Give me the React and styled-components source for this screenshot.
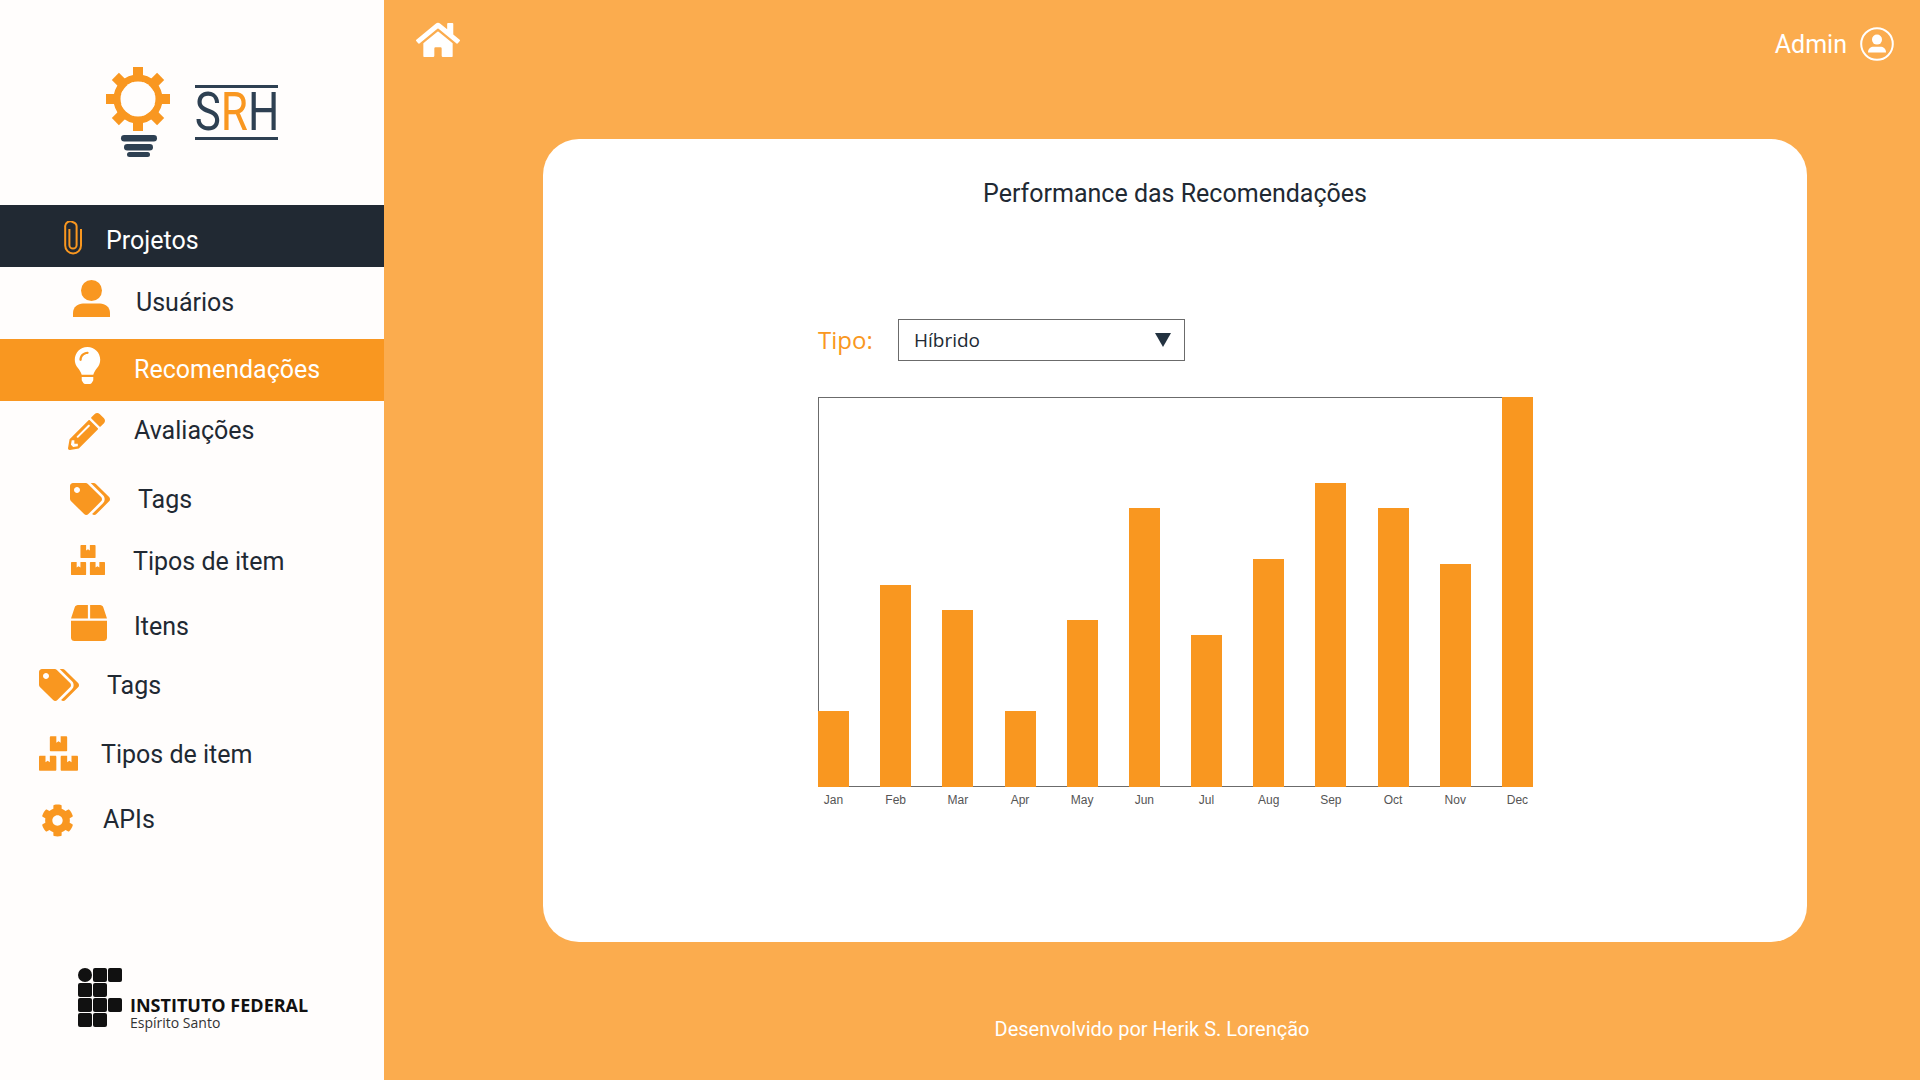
import React from "react";
import styled, { createGlobalStyle } from "styled-components";
import { FaHome, FaLightbulb, FaPencilAlt, FaTags, FaBoxes, FaBox, FaCog } from "react-icons/fa";

const Global = createGlobalStyle`
  html, body { margin: 0; padding: 0; }
  body { font-family: Roboto, "Liberation Sans", sans-serif; }
`;

const ORANGE = "#f99720";
const DARK = "#212933";

const Page = styled.div`
  display: flex;
  width: 1920px;
  height: 1080px;
  overflow: hidden;
  background: #fbac4e;
`;
const Sidebar = styled.aside`
  width: 384px;
  flex: none;
  display: flex;
  flex-direction: column;
  background: #fffdfc;
`;
const LogoArea = styled.div`
  height: 205px;
  box-sizing: border-box;
  padding: 67px 0 0 106px;
  display: flex;
  gap: 25px;
  align-items: flex-start;
`;
const SrhMark = styled.div`
  margin-top: 18px;
  width: 83px;
  height: 55px;
  box-sizing: border-box;
  border-top: 3px solid #2e4052;
  border-bottom: 3px solid #2e4052;
  display: flex;
  justify-content: center;
  align-items: center;
`;
const SrhText = styled.span`
  font-family: Roboto, sans-serif;
  font-size: 53px;
  line-height: 49px;
  font-weight: 400;
  letter-spacing: 0;
  color: #2e4052;
  transform: scaleX(0.83);
  white-space: nowrap;
`;
const SrhAccent = styled.span`
  color: ${ORANGE};
`;
const Nav = styled.nav`
  display: flex;
  flex-direction: column;
`;
const Row = styled.a`
  display: flex;
  align-items: center;
  height: ${(p) => p.$h}px;
  margin-top: ${(p) => p.$mt || 0}px;
  padding-left: ${(p) => p.$x}px;
  color: ${(p) => (p.$variant ? "#fff" : DARK)};
  background: ${(p) =>
    p.$variant === "dark" ? DARK : p.$variant === "active" ? ORANGE : "transparent"};
  font-size: 25px;
  line-height: 30px;
`;
const IconSlot = styled.span`
  width: ${(p) => p.$w}px;
  flex: none;
  display: flex;
  align-items: center;
  margin-bottom: ${(p) => Math.max(p.$up || 0, 0) * 2}px;
  margin-top: ${(p) => Math.max(-(p.$up || 0), 0) * 2}px;
  color: ${(p) => p.$color || ORANGE};
`;
const Label = styled.span`
  margin-top: ${(p) => (p.$down || 0) * 2}px;
`;
const LogoFooter = styled.div`
  margin-top: auto;
  margin-bottom: 53px;
  margin-left: 78px;
  display: flex;
  align-items: flex-end;
  gap: 8px;
`;
const IfGrid = styled.div`
  display: grid;
  grid-template-columns: repeat(3, 14px);
  grid-auto-rows: 14px;
  gap: 1px;
`;
const IfCell = styled.span`
  background: #111;
  border-radius: ${(p) => (p.$round ? "50%" : "2px")};
  visibility: ${(p) => (p.$empty ? "hidden" : "visible")};
`;
const IfText = styled.div`
  display: flex;
  flex-direction: column;
  font-family: "Open Sans", sans-serif;
  color: #111;
  margin-bottom: -3px;
`;
const IfTitle = styled.span`
  font-size: 18px;
  line-height: 19px;
  font-weight: 700;
  white-space: nowrap;
`;
const IfSub = styled.span`
  font-size: 14px;
  line-height: 15px;
  color: #333;
  white-space: nowrap;
`;
const Main = styled.main`
  flex: 1;
  display: flex;
  flex-direction: column;
  color: #fff;
`;
const TopBar = styled.header`
  height: 139px;
  box-sizing: border-box;
  padding: 18px 26px 0 32px;
  display: flex;
  justify-content: space-between;
  align-items: flex-start;
`;
const AdminBox = styled.div`
  display: flex;
  align-items: center;
  gap: 13px;
  margin-top: 9px;
  font-size: 25px;
`;
const Card = styled.section`
  margin-left: 159px;
  width: 1264px;
  height: 803px;
  box-sizing: border-box;
  padding-top: 39px;
  border-radius: 36px;
  background: #fff;
  color: ${DARK};
`;
const CardTitle = styled.h1`
  margin: 0;
  text-align: center;
  font-size: 25px;
  line-height: 32px;
  font-weight: 400;
`;
const CardBody = styled.div`
  margin: 109px 0 0 275px;
  width: 715px;
`;
const TypeRow = styled.div`
  display: flex;
  align-items: center;
  gap: 25px;
`;
const TypeLabel = styled.span`
  width: 55px;
  margin-bottom: 2px;
  font-family: "Open Sans", sans-serif;
  font-size: 24px;
  color: ${ORANGE};
`;
const SelectBox = styled.div`
  width: 287px;
  height: 42px;
  box-sizing: border-box;
  padding: 0 13px 0 15px;
  border: 1px solid #6b6b6b;
  display: flex;
  align-items: center;
  justify-content: space-between;
  font-family: "Open Sans", sans-serif;
  font-size: 19px;
  line-height: 38px;
`;
const Chart = styled.div`
  margin-top: 36px;
`;
const Plot = styled.div`
  height: 390px;
  box-shadow: inset 1px 1px 0 #6b6b6b, inset 0 -1px 0 #6b6b6b;
  display: grid;
  grid-template-columns: repeat(12, 31px);
  justify-content: space-between;
  align-items: end;
`;
const Bar = styled.div`
  height: ${(p) => p.$h}px;
  background: ${ORANGE};
`;
const Labels = styled.div`
  margin-top: 6px;
  display: grid;
  grid-template-columns: repeat(12, 31px);
  justify-content: space-between;
`;
const MonthLabel = styled.span`
  font-family: "Liberation Sans", Arial, sans-serif;
  font-size: 12px;
  line-height: 14px;
  color: #555;
  text-align: center;
`;
const Footer = styled.footer`
  margin-top: 75px;
  text-align: center;
  font-size: 20px;
  line-height: 24px;
`;

const GearLogo = () => (
  <svg width="64" height="90" viewBox="0 0 64 90">
    <g fill={ORANGE}>
      {[0, 45, 90, 135].map((a) => (
        <rect key={a} x="27" y="0" width="10" height="64" transform={`rotate(${a} 32 32)`} />
      ))}
    </g>
    <circle cx="32" cy="32" r="21" fill="none" stroke={ORANGE} strokeWidth="7" />
    <circle cx="32" cy="32" r="17.5" fill="#fffdfc" />
    <rect x="15" y="68" width="36" height="6.5" rx="3.2" fill="#2e4052" />
    <rect x="18" y="77" width="29" height="6.5" rx="3.2" fill="#2e4052" />
    <rect x="21" y="85" width="23" height="5" rx="2.5" fill="#2e4052" />
  </svg>
);
const Clip = () => (
  <svg width="18" height="34" viewBox="0 0 18 34" fill="none" stroke={ORANGE} strokeWidth="2">
    <path d="M5.4 8 V24 A3.6 3.6 0 0 0 12.6 24 V6.5 A5 5 0 0 0 9 1.2 A5 5 0 0 0 1.2 6 V24.5 A7.9 7.9 0 0 0 17 24.5 V8" />
  </svg>
);
const UserIcon = () => (
  <svg width="37" height="37" viewBox="0 0 37 37" fill={ORANGE}>
    <circle cx="18.5" cy="10.5" r="10.5" />
    <path d="M0 37 V33 C0 27 5 23.5 10 23.5 H27 C32 23.5 37 27 37 33 V37 Z" />
  </svg>
);
const AdminIcon = () => (
  <svg width="34" height="34" viewBox="0 0 34 34" fill="none">
    <circle cx="17" cy="17" r="15.8" stroke="#fff" strokeWidth="2" />
    <circle cx="17" cy="12.6" r="5" fill="#fff" />
    <path d="M8 25.5 C8 21.5 11 19.8 13.5 19.8 H20.5 C23 19.8 26 21.5 26 25.5 Z" fill="#fff" />
  </svg>
);

const bars = [
  ["Jan", 76], ["Feb", 202], ["Mar", 177], ["Apr", 76], ["May", 167], ["Jun", 279],
  ["Jul", 152], ["Aug", 228], ["Sep", 304], ["Oct", 279], ["Nov", 223], ["Dec", 390],
];

const ifCells = [
  "round", "", "", "", "", "empty", "", "", "", "", "", "empty",
];

export default function App() {
  return (
    <Page>
      <Global />
      <Sidebar>
        <LogoArea>
          <GearLogo />
          <SrhMark>
            <SrhText>S<SrhAccent>R</SrhAccent>H</SrhText>
          </SrhMark>
        </LogoArea>
        <Nav>
          <Row $h={62} $x={64} $variant="dark">
            <IconSlot $w={42} $up={-2}><Clip /></IconSlot><Label $down={5}>Projetos</Label>
          </Row>
          <Row $h={72} $x={73}>
            <IconSlot $w={63} $up={5}><UserIcon /></IconSlot><Label>Usuários</Label>
          </Row>
          <Row $h={62} $x={69} $variant="active">
            <IconSlot $w={65} $color="#fff" $up={5}><FaLightbulb size={37} /></IconSlot><Label>Recomendações</Label>
          </Row>
          <Row $h={48} $mt={6} $x={68}>
            <IconSlot $w={66}><FaPencilAlt size={37} /></IconSlot><Label>Avaliações</Label>
          </Row>
          <Row $h={48} $mt={20} $x={70}>
            <IconSlot $w={68}><FaTags size={40} /></IconSlot><Label $down={1}>Tags</Label>
          </Row>
          <Row $h={48} $mt={14} $x={71}>
            <IconSlot $w={62} $up={1}><FaBoxes size={34} /></IconSlot><Label $down={1}>Tipos de item</Label>
          </Row>
          <Row $h={48} $mt={17} $x={71}>
            <IconSlot $w={63} $up={3}><FaBox size={36} /></IconSlot><Label $down={1}>Itens</Label>
          </Row>
          <Row $h={48} $mt={12} $x={39}>
            <IconSlot $w={68} $up={1}><FaTags size={40} /></IconSlot><Label>Tags</Label>
          </Row>
          <Row $h={48} $mt={21} $x={39}>
            <IconSlot $w={62} $up={2}><FaBoxes size={39} /></IconSlot><Label>Tipos de item</Label>
          </Row>
          <Row $h={48} $mt={17} $x={41}>
            <IconSlot $w={62}><FaCog size={33} /></IconSlot><Label>APIs</Label>
          </Row>
        </Nav>
        <LogoFooter>
          <IfGrid>
            {ifCells.map((c, i) => (
              <IfCell key={i} $round={c === "round"} $empty={c === "empty"} />
            ))}
          </IfGrid>
          <IfText>
            <IfTitle>INSTITUTO FEDERAL</IfTitle>
            <IfSub>Espírito Santo</IfSub>
          </IfText>
        </LogoFooter>
      </Sidebar>
      <Main>
        <TopBar>
          <FaHome size={44} color="#fff" />
          <AdminBox>
            Admin
            <AdminIcon />
          </AdminBox>
        </TopBar>
        <Card>
          <CardTitle>Performance das Recomendações</CardTitle>
          <CardBody>
            <TypeRow>
              <TypeLabel>Tipo:</TypeLabel>
              <SelectBox>
                Híbrido
                <svg width="16" height="14" viewBox="0 0 16 14">
                  <path d="M0 0 H16 L8 14 Z" fill="#233240" />
                </svg>
              </SelectBox>
            </TypeRow>
            <Chart>
              <Plot>
                {bars.map(([m, h]) => (
                  <Bar key={m} $h={h} />
                ))}
              </Plot>
              <Labels>
                {bars.map(([m]) => (
                  <MonthLabel key={m}>{m}</MonthLabel>
                ))}
              </Labels>
            </Chart>
          </CardBody>
        </Card>
        <Footer>Desenvolvido por Herik S. Lorenção</Footer>
      </Main>
    </Page>
  );
}
